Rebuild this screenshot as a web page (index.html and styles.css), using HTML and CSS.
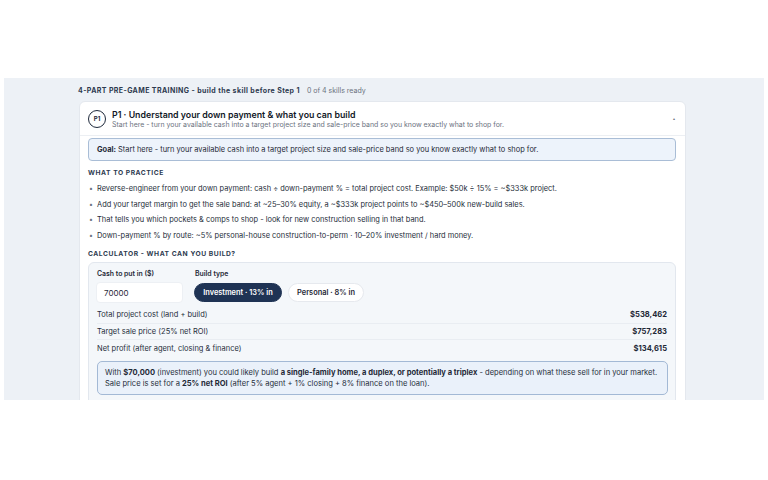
FILE: index.html
```html
<!DOCTYPE html>
<html>
<head>
<meta charset="utf-8">
<link rel="stylesheet" href="styles.css">
</head>
<body>
<div class="top-space"></div>
<div class="panel">
  <div class="heading"><span class="h-strong">4-PART PRE-GAME TRAINING - build the skill before Step 1</span><span class="h-muted">0 of 4 skills ready</span></div>
  <div class="card">
    <div class="card-head">
      <div class="badge">P1</div>
      <div class="head-text">
        <div class="title">P1 · Understand your down payment &amp; what you can build</div>
        <div class="subtitle">Start here - turn your available cash into a target project size and sale-price band so you know exactly what to shop for.</div>
      </div>
      <div class="chev">▴</div>
    </div>
    <div class="card-body">
      <div class="goal"><b>Goal:</b> Start here - turn your available cash into a target project size and sale-price band so you know exactly what to shop for.</div>
      <div class="section-label">WHAT TO PRACTICE</div>
      <ul class="bullets">
        <li>Reverse-engineer from your down payment: cash ÷ down-payment % = total project cost. Example: $50k ÷ 15% = ~$333k project.</li>
        <li>Add your target margin to get the sale band: at ~25–30% equity, a ~$333k project points to ~$450–500k new-build sales.</li>
        <li>That tells you which pockets &amp; comps to shop - look for new construction selling in that band.</li>
        <li>Down-payment % by route: ~5% personal-house construction-to-perm · 10–20% investment / hard money.</li>
      </ul>
      <div class="section-label calc-label">CALCULATOR - WHAT CAN YOU BUILD?</div>
      <div class="calc">
        <div class="controls">
          <div class="field">
            <div class="f-label">Cash to put in ($)</div>
            <div class="input">70000</div>
          </div>
          <div class="field">
            <div class="f-label">Build type</div>
            <div class="toggles">
              <div class="pill active">Investment · 13% in</div>
              <div class="pill">Personal · 8% in</div>
            </div>
          </div>
        </div>
        <div class="rows">
          <div class="row"><span>Total project cost (land + build)</span><b>$538,462</b></div>
          <div class="row"><span>Target sale price (25% net ROI)</span><b>$757,283</b></div>
          <div class="row"><span>Net profit (after agent, closing &amp; finance)</span><b>$134,615</b></div>
        </div>
        <div class="result">With <b>$70,000</b> (investment) you could likely build <b>a single-family home, a duplex, or potentially a triplex</b> - depending on what these sell for in your market.<br>Sale price is set for a <b>25% net ROI</b> (after 5% agent + 1% closing + 8% finance on the loan).</div>
      </div>
    </div>
  </div>
</div>
</body>
</html>
```
FILE: styles.css
```css
* { box-sizing: border-box; }
html, body { margin: 0; padding: 0; background: #ffffff; }
body { font-family: Inter, "Noto Sans", sans-serif; color: #1f2937; }
.top-space { height: 78px; }
.panel {
  margin: 0 4px;
  height: 322px;
  overflow: hidden;
  background: #edf1f6;
  padding: 8px 0 0 74px;
}
.heading { display: flex; align-items: baseline; gap: 7px; height: 10px; margin-bottom: 5px; }
.h-strong { font-size: 7px; font-weight: 700; color: #2d3a4f; letter-spacing: 0.4px; }
.h-muted { font-size: 7px; color: #6b7280; }
.card {
  width: 607px;
  margin-left: 1px;
  background: #ffffff;
  border: 1px solid #e4e8ee;
  border-radius: 6px;
}
.card-head {
  height: 34px;
  display: flex;
  align-items: center;
  padding: 0 9px 0 8px;
  border-bottom: 1px solid #eceff3;
  gap: 6px;
}
.badge {
  width: 18px; height: 18px;
  border: 1.4px solid #1e293b;
  border-radius: 50%;
  display: flex; align-items: center; justify-content: center;
  font-size: 6px; font-weight: 700; color: #1e293b;
  flex: none;
}
.head-text { flex: 1; }
.title { font-size: 8.8px; font-weight: 600; color: #111827; line-height: 11px; }
.subtitle { font-size: 6.95px; color: #6b7280; line-height: 9px; }
.chev { font-size: 4px; color: #6b7280; margin-right: 1px; }
.card-body { padding: 2px 9px 0 8px; }
.goal {
  height: 23px;
  display: flex; align-items: center;
  padding: 0 8px;
  background: #edf3fb;
  border: 1px solid #a9bdd6;
  border-radius: 4px;
  font-size: 7.45px;
  color: #1f2937;
  white-space: nowrap;
}
.goal b { font-weight: 700; margin-right: 2px; }
.section-label {
  margin-top: 8px;
  font-size: 6.7px; font-weight: 700; color: #2d3a4f;
  letter-spacing: 0.55px; line-height: 9px;
}
.bullets { list-style: none; margin: 3px 0 0 0; padding: 0; }
.bullets li {
  position: relative;
  padding-left: 9px;
  font-size: 7.45px; color: #262e3a; line-height: 15.5px;
  white-space: nowrap;
}
.bullets li::before {
  content: "•"; position: absolute; left: 1px; top: 0; color: #6b7280; font-size: 7px;
}
.calc-label { margin-top: 7px; }
.calc {
  margin-top: 3px;
  background: #f4f7fa;
  border: 1px solid #e2e7ee;
  border-radius: 6px;
  padding: 6px 8px 10px 7px;
}
.controls { display: flex; gap: 11px; }
.f-label { font-size: 6.9px; font-weight: 600; color: #1f2937; line-height: 9px; margin: 0 0 4px 1px; }
.input {
  width: 87px; height: 21px;
  background: #ffffff;
  border: 1px solid #edf0f4;
  border-radius: 4px;
  padding-left: 7px;
  display: flex; align-items: center;
  font-size: 8px; color: #1f2937;
}
.toggles { display: flex; gap: 6px; padding-top: 1px; }
.pill {
  height: 19px;
  padding: 0 6px;
  border-radius: 10px;
  display: flex; align-items: center; justify-content: center;
  font-size: 7.4px; font-weight: 600;
  background: #ffffff; color: #1f2937;
  border: 1px solid #e6e9ee;
  width: 76px;
}
.pill.active { background: #1f3354; color: #ffffff; border-color: #1f3354; width: 88px; }
.rows { margin-top: 4px; padding-left: 1px; }
.row {
  display: flex; justify-content: space-between; align-items: center;
  height: 16.5px;
  font-size: 7.5px; color: #262e3a;
  border-bottom: 1px solid #e9edf2;
}
.row:last-child { border-bottom: none; }
.row b { font-weight: 700; color: #1f2937; font-size: 7.6px; }
.result {
  margin-top: 4px;
  margin-left: 1px;
  margin-right: -1px;
  background: #eaf1fa;
  border: 1px solid #a3b9d5;
  border-radius: 5px;
  padding: 5px 7px 5px 7px;
  font-size: 7.55px; line-height: 11px; color: #262e3a;
  white-space: nowrap;
}
.result b { font-weight: 700; color: #1f2937; }
```
